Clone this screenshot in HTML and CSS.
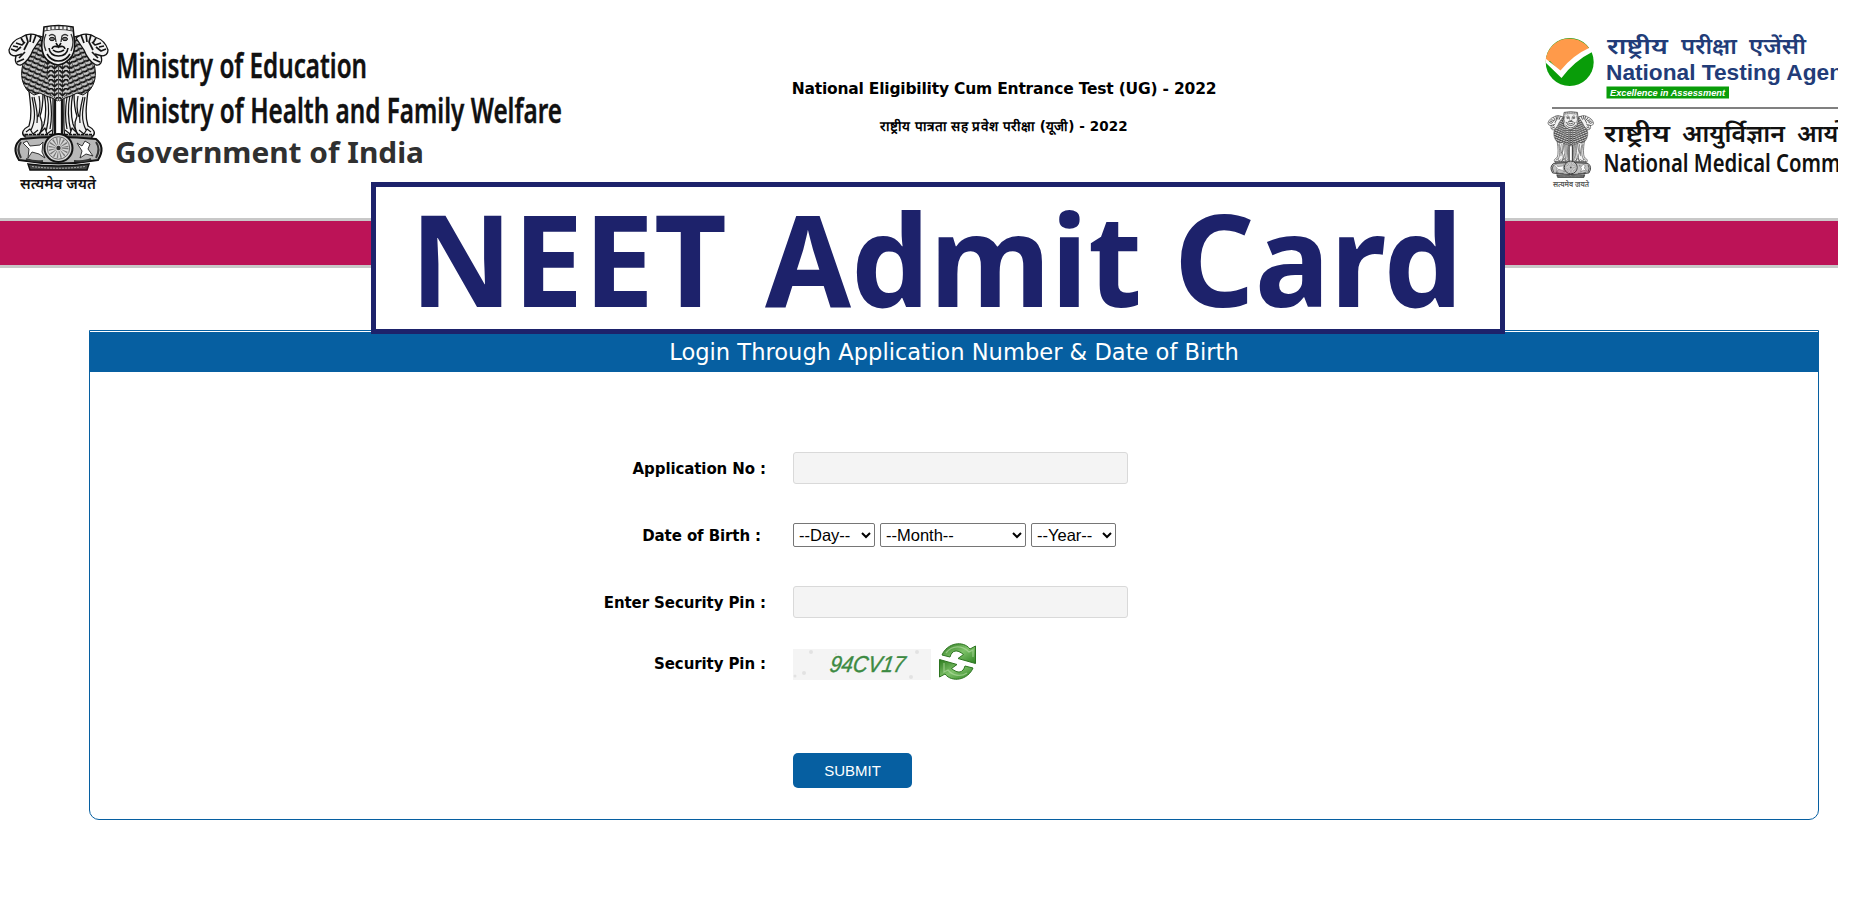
FILE: index.html
```html
<!DOCTYPE html>
<html lang="en">
<head>
<meta charset="utf-8">
<title>NEET Admit Card</title>
<link rel="stylesheet" href="styles.css">
</head>
<body>
<svg class="defs" width="0" height="0">
  <defs>
    <pattern id="mane" width="6" height="4.500" patternUnits="userSpaceOnUse" patternTransform="rotate(24)">
      <rect width="6" height="4.500" fill="#c4c4c4"/>
      <path d="M0 .7Q3 3.200 6 .7" fill="none" stroke="#111" stroke-width="1.900"/>
      <path d="M0 1V4.500" stroke="#222" stroke-width="1.100"/>
    </pattern>
    <pattern id="chest" width="7" height="4.500" patternUnits="userSpaceOnUse">
      <rect width="7" height="4.500" fill="#ccc"/>
      <path d="M0 0L3.500 3L7 0" fill="none" stroke="#111" stroke-width="1.800"/>
      <path d="M3.500 0V2" stroke="#333" stroke-width="1"/>
    </pattern>
    <linearGradient id="leaf" x1="0" y1="0" x2="1" y2="1">
      <stop offset="0" stop-color="#2c7a1e"/><stop offset=".5" stop-color="#7fc26a"/><stop offset="1" stop-color="#2f8423"/>
    </linearGradient>
    <g id="halfLion" stroke="#151515" fill="#f2f2f2" stroke-width="1.300" stroke-linejoin="round">
      <path d="M20 66C22 82 23 92 20 101C14 104 12 108 15 111H29C34 105 34 98 31 91C34 83 34 77 34 68Z"/>
      <path d="M35 68C38 83 37 91 35 99L30 111H43C45 104 44 90 44 70Z"/>
      <path d="M23 72C26 86 27 95 22 105M25 72C28 84 29 92 28 98M30 71C32 82 31 87 29 92M38 70C41 85 40 95 37 107M41 72C43 84 43 94 41 104M17 107L21 104L24 109L29 105M32 107L36 103L38 109L43 105" fill="none" stroke-width="1.200"/>
      <path d="M46 72V110" stroke-width="2.300"/>
      <path d="M34 12C27 9 24 12 23 16C24 26 19 33 14 39C11 50 13 59 19 66L25 70L31 68L37 71L43 73L49 76V12Z" fill="url(#mane)" stroke-width="1"/>
      <path d="M35 32L49 40V76L42 70Z" fill="url(#chest)" stroke="none"/>
      <path d="M32 13C26 8 18 8 13 12C7 14 2 18 0 25C0 29 3 31 7 31C5 37 8 41 12 40C17 38 22 31 24 25Z"/>
      <path d="M2 24L7 26L12 22M6 31L13 29M8 37L15 34M7 18L13 20L16 17M12 13L15 18M17 10L19 17L15 25M22 9L21 17M27 10L24 18M10 33L16 27M4 21L9 22" fill="none" stroke-width="1.700"/>
    </g>
    <g id="emblem">
      <use href="#halfLion"/>
      <use href="#halfLion" transform="translate(99 0) scale(-1 1)"/>
      <path d="M35 2Q49 -1 64 2L65 12Q67 24 63 31Q57 39 49 40Q40 39 35 31Q31 22 34 12Z" fill="#f0f0f0" stroke="#111" stroke-width="1.600"/>
      <path d="M35 6Q49 3 64 6M38 2V5M42 1V5M46 1V4M50 1V4M54 1V4M58 1V5M62 2V5" fill="none" stroke="#333" stroke-width="1.200"/>
      <path d="M37 9Q33 17 37 26M62 9Q66 17 62 26M40 11Q43 8 46 11L47 17M59 11Q56 8 53 11L52 17" fill="none" stroke="#333" stroke-width="1.300"/>
      <ellipse cx="43" cy="14" rx="2.500" ry="1.700" fill="#777" stroke="#111"/>
      <ellipse cx="56" cy="14" rx="2.500" ry="1.700" fill="#777" stroke="#111"/>
      <path d="M47 18L49.500 22L52 18M43 24Q44 20 49.500 22Q55 20 56 24M40 23Q41 31 49.500 31Q58 31 59 23M44 25Q49 29 55 25M38 29Q42 36 49.500 36Q57 36 61 29" fill="none" stroke="#111" stroke-width="1.600"/>
      <path d="M16 109.500H83V114H16Z" fill="#777" stroke="#111" stroke-width="1.300" stroke-dasharray="3 1"/>
      <path d="M12 114Q49 110 87 114Q97 122 89 135Q50 142 10 135Q2 122 12 114Z" fill="#b8b8b8" stroke="#111" stroke-width="2"/>
      <path d="M12 117Q7 124 12 133M87 117Q92 124 87 133M17 134Q25 137 34 136M65 136Q76 137 82 134" fill="none" stroke="#333" stroke-width="2"/>
      <path d="M14 118L18 116L21 121L31 120L34 117L33 127L36 133L30 129L23 127L19 133L20 124Z" fill="#fff" stroke="#333" stroke-width="1"/>
      <path d="M68 118L73 121L76 116L81 119L79 124L84 131L77 129L71 133L73 126Z" fill="#fff" stroke="#333" stroke-width="1"/>
      <circle cx="49.500" cy="123" r="14" fill="#d5d5d5" stroke="#111" stroke-width="2"/>
      <circle cx="49.500" cy="123" r="11.200" fill="none" stroke="#666" stroke-width="1"/>
      <circle cx="49.500" cy="123" r="6.500" fill="none" stroke="#777" stroke-width="7" stroke-dasharray="1 1.550"/>
      <circle cx="49.500" cy="123" r="2.200" fill="#333"/>
      <path d="M19 139Q49 143 80 139L78 145H21Z" fill="#444" stroke="#111" stroke-width="1.500"/>
      <path d="M23 141.500Q50 145 76 141.500" fill="none" stroke="#aaa" stroke-width="1" stroke-dasharray="2 1"/>
    </g>
  </defs>
</svg>

<div class="page">
  <header class="masthead">
    <svg class="ministry" width="600" height="218" viewBox="0 0 600 218">
      <use href="#emblem" x="9" y="25"/>
      <text class="hindi ink" x="20" y="189" font-size="15" textLength="76" lengthAdjust="spacingAndGlyphs">सत्यमेव जयते</text>
      <g class="noto ink ministries">
        <text x="116" y="78" font-size="34" textLength="251" lengthAdjust="spacingAndGlyphs">Ministry of Education</text>
        <text x="116" y="123" font-size="34" textLength="446" lengthAdjust="spacingAndGlyphs">Ministry of Health and Family Welfare</text>
      </g>
      <text class="noto gov" x="115" y="163" font-size="29" textLength="309" lengthAdjust="spacingAndGlyphs">Government of India</text>
    </svg>
    <div class="exam">
      <h1>National Eligibility Cum Entrance Test (UG) - 2022</h1>
      <h2>राष्ट्रीय पात्रता सह प्रवेश परीक्षा (यूजी) - 2022</h2>
    </div>
    <svg class="agency" width="298" height="218" viewBox="1540 0 298 218">
      <circle cx="1569.700" cy="62" r="24" fill="#099d09"/>
      <path d="M1545.500 62A24.200 24.200 0 0 1 1590 49.500L1561 73L1550 61Z" fill="#ff9a4a"/>
      <path d="M1545.500 58.500L1560.500 70.500Q1573 55 1590 47.500L1593 51.500Q1574 61 1561.500 78L1545.500 62.500Z" fill="#fff"/>
      <g class="hindi navy">
        <text x="1607" y="54" font-size="22" textLength="61" lengthAdjust="spacingAndGlyphs">राष्ट्रीय</text>
        <text x="1681" y="54" font-size="22" textLength="56" lengthAdjust="spacingAndGlyphs">परीक्षा</text>
        <text x="1749" y="54" font-size="22" textLength="57" lengthAdjust="spacingAndGlyphs">एजेंसी</text>
      </g>
      <text class="arial navy" x="1606" y="79.500" font-size="22.500" textLength="237" lengthAdjust="spacingAndGlyphs">National Testing Agen</text>
      <rect x="1606.500" y="86.500" width="122.500" height="12" fill="#099d09"/>
      <text class="arial slogan" x="1610" y="96" font-size="9.500" textLength="115" lengthAdjust="spacingAndGlyphs">Excellence in Assessment</text>
      <rect x="1552" y="107" width="286" height="2" fill="#808080"/>
      <g transform="translate(1548 111.500) scale(.46 .455)" opacity=".85"><use href="#emblem"/></g>
      <text class="hindi tiny" x="1553" y="187" font-size="7.500" textLength="36" lengthAdjust="spacingAndGlyphs">सत्यमेव जयते</text>
      <g class="hindi ink">
        <text x="1604" y="142" font-size="24" textLength="66" lengthAdjust="spacingAndGlyphs">राष्ट्रीय</text>
        <text x="1682" y="142" font-size="24" textLength="103" lengthAdjust="spacingAndGlyphs">आयुर्विज्ञान</text>
        <text x="1797" y="142" font-size="24" textLength="48" lengthAdjust="spacingAndGlyphs">आयो</text>
      </g>
      <text class="noto ink" x="1603.500" y="172" font-size="25" textLength="237" lengthAdjust="spacingAndGlyphs">National Medical Comm</text>
    </svg>
  </header>
  <div class="ribbon"></div>

  <form class="login">
    <div class="login-title">Login Through Application Number &amp; Date of Birth</div>
    <div class="fields">
      <label class="row-app">Application No :</label>
      <input type="text" aria-label="Application No">
      <label class="row-dob">Date of Birth :</label>
      <div class="dob">
        <select class="day"><option>--Day--</option></select>
        <select class="month"><option>--Month--</option></select>
        <select class="year"><option>--Year--</option></select>
      </div>
      <label class="row-pin">Enter Security Pin :</label>
      <input type="text" aria-label="Security Pin">
      <label class="row-captcha">Security Pin :</label>
      <div class="captcha">
        <svg width="138" height="31" viewBox="0 0 138 31">
          <rect width="138" height="31" fill="#f4f4f4"/>
          <g fill="#e2e2e2"><circle cx="18" cy="3" r="2"/><circle cx="11" cy="24" r="2"/><circle cx="2" cy="27" r="1.500"/><circle cx="124" cy="3" r="2"/><circle cx="118" cy="28" r="2"/><circle cx="43" cy="5" r="1"/></g>
          <text class="code" transform="translate(36 23) skewX(-9)" font-size="23" textLength="75" lengthAdjust="spacingAndGlyphs">94CV17</text>
        </svg>
        <svg width="37" height="37" viewBox="0 0 37 37">
          <g fill="url(#leaf)" stroke="#2c7420" stroke-width="1" stroke-linejoin="round">
            <path d="M3 12C8 0 24 -3 31 6L36.500 3V20.500L19 15.500L24.500 11.500C18 6 13 7 11 14Z"/>
            <path d="M34 25C29 37 13 40 6 31L.5 34V16.500L18 21.500L12.500 25.500C19 31 24 30 26 23Z"/>
          </g>
          <path d="M7 10C13 2 23 2 30 9L34 7V14M5 20V29L9 27C14 33 22 34 28 30" fill="none" stroke="#b7dda7" stroke-width="1.300" opacity=".6"/>
        </svg>
      </div>
      <button type="button">SUBMIT</button>
    </div>
  </form>

  <div class="banner">
    <svg width="1124" height="142" viewBox="376 187 1124 142">
      <text x="410" y="306.500" textLength="317" lengthAdjust="spacingAndGlyphs">NEET</text>
      <text x="765" y="306.500" textLength="377" lengthAdjust="spacingAndGlyphs">Admit</text>
      <text x="1174" y="306.500" textLength="289" lengthAdjust="spacingAndGlyphs">Card</text>
    </svg>
  </div>
</div>
</body>
</html>
```
FILE: styles.css
```css
* { box-sizing: border-box; }
body { margin: 0; background: #fff; color: #000; font-family: Verdana, "DejaVu Sans", sans-serif; }
.defs { display: block; position: absolute; }
.page { position: relative; width: 1838px; height: 905px; overflow: hidden; }

.masthead { display: flex; justify-content: space-between; height: 218px; }
.masthead svg { display: block; flex: none; }
.exam { width: 470px; margin-left: 169px; margin-right: auto; padding-top: 79px; text-align: center; white-space: nowrap; }
.exam h1 { margin: 0; font-size: 15.500px; line-height: 20px; letter-spacing: -0.2px; }
.exam h2 { margin: 18px 0 0; font-size: 13.500px; line-height: 18px; font-weight: 600; letter-spacing: .1px; }
.hindi { font-family: "Noto Sans Devanagari", "Noto Sans", sans-serif; font-weight: 600; }
.noto { font-family: "Noto Sans", "Open Sans", sans-serif; font-weight: 600; }
.ink { fill: #111; }
.ministries { stroke: #111; stroke-width: .4px; }
.navy { fill: #223c78; }
.gov { fill: #303030; font-weight: 700; }
.tiny { fill: #555; }
.arial { font-family: "Liberation Sans", Arial, sans-serif; font-weight: 700; }
.slogan { fill: #fff; font-style: italic; }

.ribbon { height: 50px; background: #bc1357; border: solid #c8c8c8; border-width: 3px 0; }

.login { width: 1730px; height: 490px; margin: 62px 0 0 89px; padding-top: 1px; border: 1px solid #065fa1; border-radius: 0 0 10px 10px; }
.login-title { height: 40px; padding-top: 1px; background: #065fa1; color: #fff; font-size: 22.600px; line-height: 39px; text-align: center; }
.fields { display: grid; grid-template-columns: 676px 335px; column-gap: 27px; grid-template-rows: 71px 63px 57px 110px 35px; padding-top: 80px; }
.fields label { justify-self: end; font-size: 15px; font-weight: 700; line-height: 32px; letter-spacing: -0.1px; white-space: nowrap; }
.row-app, .row-pin { margin-top: 1px; }
.row-dob { padding-right: 5px; margin-top: -3px; }
.row-captcha { margin-top: 5px; }
.fields input { width: 335px; height: 32px; border: 1px solid #d9d9d9; border-radius: 3px; background: #f4f4f4; }
.dob { display: flex; gap: 5px; }
select { height: 24px; border: 1px solid #767676; border-radius: 2px; background: #fff; color: #000; font: 16.500px "Liberation Sans", Arial, sans-serif; padding: 0 0 0 1px; }
.day { width: 82px; }
.month { width: 146px; }
.year { width: 85px; }
.captcha { display: flex; align-items: flex-end; gap: 8px; height: 37px; }
.code { font-family: "Liberation Sans", Arial, sans-serif; font-style: italic; fill: #3c8a42; stroke: #3c8a42; stroke-width: .4px; }
button { grid-column: 2; width: 119px; height: 35px; border: 0; border-radius: 5px; background: #065fa1; color: #fff; font: 15px "Liberation Sans", Arial, sans-serif; }

.banner { position: absolute; left: 371px; top: 182px; width: 1134px; height: 152px; border: 5px solid #1d226b; background: #fff; }
.banner svg { display: block; }
.banner text { font: 700 127.500px "Noto Sans", "Open Sans", sans-serif; fill: #1d226b; }
```
